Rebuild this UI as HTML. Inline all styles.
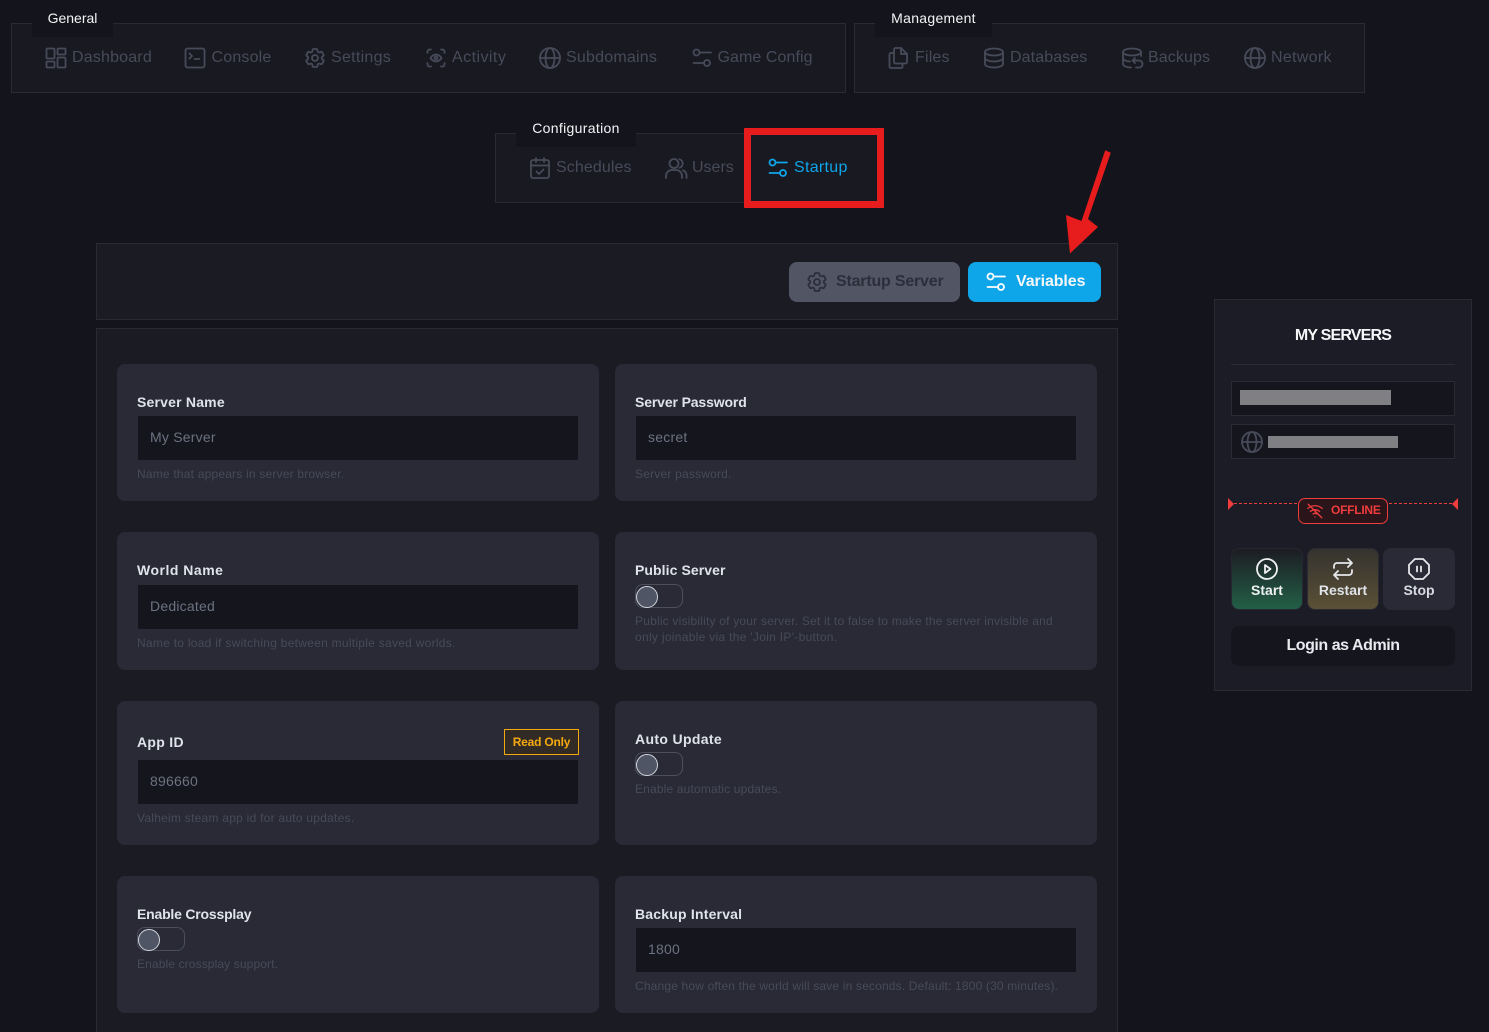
<!DOCTYPE html>
<html><head><meta charset="utf-8">
<style>
*{box-sizing:border-box;margin:0;padding:0}
html,body{width:1489px;height:1032px;overflow:hidden;background:#14141c;font-family:"Liberation Sans",sans-serif}
.a{position:absolute}
.box{position:absolute;background:#191921;border:1px solid #2a2a35}
.lab{position:absolute;background:#14141c;color:#f4f4f6;font-size:14px;height:37px;top:0;line-height:36px;text-align:center}
.n{position:absolute;font-size:16px;color:#474b59;line-height:20px;white-space:nowrap;letter-spacing:.18px}
svg{position:absolute;fill:none;stroke:#474b59;stroke-width:1.8;stroke-linecap:round;stroke-linejoin:round}
.card{position:absolute;background:#2a2a36;border-radius:8px;width:482px}
.l{position:absolute;left:20px;font-size:14px;font-weight:bold;color:#dfe3ea;line-height:18px;white-space:nowrap;letter-spacing:0}
.i{position:absolute;left:21px;width:440px;height:44px;background:#15151d;color:#6b7280;font-size:14px;line-height:43px;padding-left:12px;letter-spacing:.22px}
.h{position:absolute;left:20px;font-size:12px;color:#474b59;line-height:16px;letter-spacing:.2px;white-space:nowrap}
.t{position:absolute;left:20px;width:48px;height:24px;border:1px solid #4b4f5d;border-radius:8px}
.t:after{content:"";position:absolute;left:0;top:1px;width:20px;height:20px;border-radius:50%;background:#4f5565;border:1px solid #d1d5db}
.b{position:absolute;top:548px;width:72px;height:62px;border-radius:8px;text-align:center;color:#e5e7eb;font-size:14px;font-weight:bold;padding-top:33px;line-height:17px}
</style></head><body>
<div class="a" style="left:0;top:0;width:1489px;height:1032px;overflow:hidden">

<div class="box" style="left:11px;top:23px;width:835px;height:70px"></div>
<div class="box" style="left:854px;top:23px;width:511px;height:70px"></div>
<div class="box" style="left:495px;top:133px;width:384px;height:70px"></div>
<div class="lab" style="left:32px;width:81px">General</div>
<div class="lab" style="left:875px;width:117px;letter-spacing:.3px">Management</div>
<div class="lab" style="left:516px;width:120px;top:110px;letter-spacing:.33px">Configuration</div>

<!-- General nav -->
<svg style="left:44px;top:46px" width="24" height="24" viewBox="0 0 24 24"><rect x="2.500" y="2.500" width="8" height="10" rx="1"/><rect x="13.500" y="2.500" width="8" height="6" rx="1"/><rect x="2.500" y="15.500" width="8" height="6" rx="1"/><rect x="13.500" y="11.500" width="8" height="10" rx="1"/></svg>
<div class="n" style="left:72px;top:47.500px">Dashboard</div>
<svg style="left:183px;top:46px" width="24" height="24" viewBox="0 0 24 24"><rect x="2.500" y="2.500" width="19" height="19" rx="2"/><path d="M6.500 7.500l2.500 2.500-2.500 2.500M11.500 13h5"/></svg>
<div class="n" style="left:211.500px;top:47.500px">Console</div>
<svg style="left:303px;top:46px" width="24" height="24" viewBox="0 0 24 24"><path d="M9.594 3.940c.09-.542.56-.94 1.11-.94h2.593c.55 0 1.02.398 1.11.94l.213 1.281c.063.374.313.686.645.87.074.04.147.083.22.127.325.196.72.257 1.075.124l1.217-.456a1.125 1.125 0 011.37.49l1.296 2.247a1.125 1.125 0 01-.26 1.431l-1.003.827c-.293.24-.438.613-.431.992a6.759 6.759 0 010 .255c-.007.378.138.75.43.99l1.005.828c.424.35.534.954.26 1.43l-1.298 2.247a1.125 1.125 0 01-1.369.491l-1.217-.456c-.355-.133-.75-.072-1.076.124a6.570 6.570 0 01-.22.128c-.331.183-.581.495-.644.869l-.213 1.280c-.09.543-.56.941-1.11.941h-2.594c-.55 0-1.020-.398-1.110-.94l-.213-1.281c-.062-.374-.312-.686-.644-.87a6.520 6.520 0 01-.22-.127c-.325-.196-.72-.257-1.076-.124l-1.217.456a1.125 1.125 0 01-1.369-.49l-1.297-2.247a1.125 1.125 0 01.26-1.431l1.004-.827c.292-.24.437-.613.43-.992a6.932 6.932 0 010-.255c.007-.378-.138-.75-.43-.99l-1.004-.828a1.125 1.125 0 01-.26-1.43l1.297-2.247a1.125 1.125 0 011.37-.491l1.216.456c.356.133.751.072 1.076-.124.072-.044.146-.087.22-.128.332-.183.582-.495.644-.869l.214-1.281z"/><circle cx="12" cy="12" r="3"/></svg>
<div class="n" style="left:331px;top:47.500px;letter-spacing:.28px">Settings</div>
<svg style="left:424px;top:46px" width="24" height="24" viewBox="0 0 24 24"><path d="M3.500 7V5.500a2 2 0 012-2H7M17 3.500h1.500a2 2 0 012 2V7M20.500 17v1.500a2 2 0 01-2 2H17M7 20.500H5.500a2 2 0 01-2-2V17"/><path d="M6.500 12s2-3.500 5.500-3.500 5.500 3.500 5.500 3.500-2 3.500-5.500 3.500-5.500-3.500-5.500-3.500z"/><circle cx="12" cy="12" r="1.500"/></svg>
<div class="n" style="left:452px;top:47.500px;letter-spacing:.45px">Activity</div>
<svg style="left:538px;top:46px" width="24" height="24" viewBox="0 0 24 24"><circle cx="12" cy="12" r="10"/><ellipse cx="12" cy="12" rx="4.500" ry="10"/><path d="M2 12h20"/></svg>
<div class="n" style="left:566px;top:47.500px;letter-spacing:.22px">Subdomains</div>
<svg style="left:690px;top:46px" width="24" height="24" viewBox="0 0 24 24"><circle cx="6.500" cy="6.500" r="3"/><circle cx="17" cy="17" r="3"/><path d="M10 6.500h11M3.500 17H14"/></svg>
<div class="n" style="left:717.500px;top:47.500px;letter-spacing:.08px">Game Config</div>

<!-- Management nav -->
<svg style="left:887px;top:46px" width="24" height="24" viewBox="0 0 24 24"><path d="M7 3.500A1.500 1.500 0 018.500 2H14l6 6v8a1.500 1.500 0 01-1.500 1.500h-10A1.500 1.500 0 017 16z"/><path d="M14 2v6h6"/><path d="M7 7H4a1.500 1.500 0 00-1.500 1.500V20.500A1.500 1.500 0 004 22h10a1.500 1.500 0 001.500-1.500v-3"/></svg>
<div class="n" style="left:915px;top:47.500px">Files</div>
<svg style="left:982px;top:46px" width="24" height="24" viewBox="0 0 24 24"><ellipse cx="12" cy="6" rx="9" ry="3.500"/><path d="M3 6v12c0 1.900 4 3.500 9 3.500s9-1.600 9-3.500V6M3 12c0 1.900 4 3.500 9 3.500s9-1.600 9-3.500"/></svg>
<div class="n" style="left:1010px;top:47.500px;letter-spacing:.1px">Databases</div>
<svg style="left:1120px;top:46px" width="24" height="24" viewBox="0 0 24 24"><ellipse cx="12" cy="6" rx="9" ry="3.500"/><path d="M3 6v12c0 1.900 3.500 3.500 8 3.500M21 6v4M3 12c0 1.900 3 3.300 7 3.500"/><path d="M15 12l-2.500 2.500L15 17M12.500 14.500H19a3.500 3.500 0 010 7h-3"/></svg>
<div class="n" style="left:1148px;top:47.500px;letter-spacing:.1px">Backups</div>
<svg style="left:1243px;top:46px" width="24" height="24" viewBox="0 0 24 24"><circle cx="12" cy="12" r="10"/><ellipse cx="12" cy="12" rx="4.500" ry="10"/><path d="M2 12h20"/></svg>
<div class="n" style="left:1271px;top:47.500px;letter-spacing:.3px">Network</div>

<!-- Configuration nav -->
<svg style="left:528px;top:156px" width="24" height="24" viewBox="0 0 24 24"><rect x="3" y="4" width="18" height="18" rx="2"/><path d="M3 9.500h18M8 2v4M16 2v4M8.500 15.500l2.500 2.500 4.500-4.500"/></svg>
<div class="n" style="left:556px;top:157.500px;letter-spacing:.1px">Schedules</div>
<svg style="left:664px;top:156px" width="24" height="24" viewBox="0 0 24 24"><circle cx="10" cy="7.500" r="4.500"/><path d="M2 22v-2a6 6 0 016-6h4a6 6 0 016 6v2M15.500 3.200a4.500 4.500 0 010 8.600M19 14.300a6 6 0 013.500 5.500V22"/></svg>
<div class="n" style="left:692px;top:157.500px;letter-spacing:0">Users</div>
<svg style="left:766px;top:156px;stroke:#0ea5e9" width="24" height="24" viewBox="0 0 24 24"><circle cx="6.500" cy="6.500" r="3"/><circle cx="17" cy="17" r="3"/><path d="M10 6.500h11M3.500 17H14"/></svg>
<div class="n" style="left:794px;top:157.500px;color:#0ea5e9;letter-spacing:.3px">Startup</div>

<!-- Toolbar -->
<div class="box" style="left:96px;top:243px;width:1022px;height:77px;background:#1b1b24"></div>
<div class="a" style="left:789px;top:262px;width:171px;height:40px;background:#525664;border-radius:8px"></div>
<svg style="left:805px;top:270px;stroke:#2d2d3b" width="24" height="24" viewBox="0 0 24 24"><path d="M9.594 3.940c.09-.542.56-.94 1.11-.94h2.593c.55 0 1.02.398 1.11.94l.213 1.281c.063.374.313.686.645.87.074.04.147.083.22.127.325.196.72.257 1.075.124l1.217-.456a1.125 1.125 0 011.37.49l1.296 2.247a1.125 1.125 0 01-.26 1.431l-1.003.827c-.293.24-.438.613-.431.992a6.759 6.759 0 010 .255c-.007.378.138.75.43.99l1.005.828c.424.35.534.954.26 1.43l-1.298 2.247a1.125 1.125 0 01-1.369.491l-1.217-.456c-.355-.133-.75-.072-1.076.124a6.570 6.570 0 01-.22.128c-.331.183-.581.495-.644.869l-.213 1.280c-.09.543-.56.941-1.11.941h-2.594c-.55 0-1.020-.398-1.110-.94l-.213-1.281c-.062-.374-.312-.686-.644-.87a6.520 6.520 0 01-.22-.127c-.325-.196-.72-.257-1.076-.124l-1.217.456a1.125 1.125 0 01-1.369-.49l-1.297-2.247a1.125 1.125 0 01.26-1.431l1.004-.827c.292-.24.437-.613.43-.992a6.932 6.932 0 010-.255c.007-.378-.138-.75-.43-.99l-1.004-.828a1.125 1.125 0 01-.26-1.43l1.297-2.247a1.125 1.125 0 011.37-.491l1.216.456c.356.133.751.072 1.076-.124.072-.044.146-.087.22-.128.332-.183.582-.495.644-.869l.214-1.281z"/><circle cx="12" cy="12" r="3"/></svg>
<div class="a" style="left:836px;top:272px;font-size:16px;font-weight:bold;line-height:20px;color:#2d2d3b;white-space:nowrap;letter-spacing:-.2px">Startup Server</div>
<div class="a" style="left:968px;top:262px;width:133px;height:40px;background:#0ea5e9;border-radius:8px"></div>
<svg style="left:984px;top:270px;stroke:#fff" width="24" height="24" viewBox="0 0 24 24"><circle cx="6.500" cy="6.500" r="3"/><circle cx="17" cy="17" r="3"/><path d="M10 6.500h11M3.500 17H14"/></svg>
<div class="a" style="left:1016px;top:272px;font-size:16px;font-weight:bold;line-height:20px;color:#f4f6f8;white-space:nowrap;letter-spacing:-.1px">Variables</div>

<!-- Red annotations -->
<div class="a" style="left:744px;top:128px;width:140px;height:80px;border:7px solid #e71c1c"></div>
<svg style="left:1060px;top:145px;stroke:none" width="60" height="115" viewBox="0 0 60 115"><path fill="#e71c1c" d="M45.200 5.300L50.800 7.700 28 74 38 82 10 108.500 6 70 21.500 76z"/></svg>

<!-- Main panel -->
<div class="box" style="left:96px;top:328px;width:1022px;height:720px;background:#1b1b24"></div>

<div class="card" style="left:117px;top:364px;height:137px">
<div class="l" style="top:29px;letter-spacing:.2px">Server Name</div><div class="i" style="top:52px">My Server</div><div class="h" style="top:102px">Name that appears in server browser.</div></div>
<div class="card" style="left:615px;top:364px;height:137px">
<div class="l" style="top:29px;letter-spacing:-.13px">Server Password</div><div class="i" style="top:52px">secret</div><div class="h" style="top:102px">Server password.</div></div>

<div class="card" style="left:117px;top:532px;height:138px">
<div class="l" style="top:29px;letter-spacing:.5px">World Name</div><div class="i" style="top:53px">Dedicated</div><div class="h" style="top:103px;letter-spacing:.27px">Name to load if switching between multiple saved worlds.</div></div>
<div class="card" style="left:615px;top:532px;height:138px">
<div class="l" style="top:29px;letter-spacing:.08px">Public Server</div><div class="t" style="top:52px"></div><div class="h" style="top:81px">Public visibility of your server. Set it to false to make the server invisible and</div><div class="h" style="top:97px;letter-spacing:.3px">only joinable via the 'Join IP'-button.</div></div>

<div class="card" style="left:117px;top:701px;height:144px">
<div class="l" style="top:32px;letter-spacing:.3px">App ID</div>
<div class="a" style="left:387px;top:28px;width:75px;height:26px;border:1px solid #f5a911;background:#322a25;color:#f5a911;font-size:12px;font-weight:bold;text-align:center;line-height:24px;letter-spacing:-.2px">Read Only</div>
<div class="i" style="top:59px">896660</div><div class="h" style="top:109px;letter-spacing:.25px">Valheim steam app id for auto updates.</div></div>
<div class="card" style="left:615px;top:701px;height:144px">
<div class="l" style="top:29px;letter-spacing:.35px">Auto Update</div><div class="t" style="top:51px"></div><div class="h" style="top:80px;letter-spacing:.16px">Enable automatic updates.</div></div>

<div class="card" style="left:117px;top:876px;height:137px">
<div class="l" style="top:29px;letter-spacing:-.2px">Enable Crossplay</div><div class="t" style="top:51px"></div><div class="h" style="top:80px;letter-spacing:.12px">Enable crossplay support.</div></div>
<div class="card" style="left:615px;top:876px;height:137px">
<div class="l" style="top:29px;letter-spacing:.2px">Backup Interval</div><div class="i" style="top:52px">1800</div><div class="h" style="top:102px;letter-spacing:.17px">Change how often the world will save in seconds. Default: 1800 (30 minutes).</div></div>

<!-- Sidebar -->
<div class="box" style="left:1214px;top:299px;width:258px;height:392px;background:#1c1c26"></div>
<div class="a" style="left:1214px;width:258px;top:326px;text-align:center;font-size:16px;font-weight:bold;color:#f4f6f8;line-height:20px;letter-spacing:-.8px">MY SERVERS</div>
<div class="a" style="left:1231px;top:364px;width:224px;height:1px;background:#2a2a36"></div>
<div class="a" style="left:1231px;top:381px;width:224px;height:35px;background:#15151d;border:1px solid #2a2a36"></div>
<div class="a" style="left:1240px;top:390px;width:151px;height:15px;background:#808084"></div>
<div class="a" style="left:1231px;top:424px;width:224px;height:35px;background:#15151d;border:1px solid #2a2a36"></div>
<svg style="left:1240px;top:430px" width="24" height="24" viewBox="0 0 24 24"><circle cx="12" cy="12" r="10"/><ellipse cx="12" cy="12" rx="4.500" ry="10"/><path d="M2 12h20"/></svg>
<div class="a" style="left:1268px;top:436px;width:130px;height:12px;background:#808084"></div>

<div class="a" style="left:1234px;top:503px;width:218px;height:0;border-top:1px dashed #ef3c3c"></div>
<svg style="left:1228px;top:498px;stroke:none" width="7" height="12" viewBox="0 0 7 12"><path fill="#ef3c3c" d="M0 0l6 6-6 6z"/></svg>
<svg style="left:1452px;top:498px;stroke:none" width="7" height="12" viewBox="0 0 7 12"><path fill="#ef3c3c" d="M6 0L0 6l6 6z"/></svg>
<div class="a" style="left:1298px;top:498px;width:90px;height:26px;background:#2a151a;border:1px solid #ef3c3c;border-radius:7px"></div>
<svg style="left:1306px;top:502px;stroke:#ef3c3c;stroke-width:1.800" width="18" height="18" viewBox="0 0 24 24"><path d="M3 3l18 18M2.500 8.500A14 14 0 0112 5a14 14 0 019.500 3.500M6 12.500a9 9 0 0112 0M9.500 16a4 4 0 015 0M12 20h.01"/></svg>
<div class="a" style="left:1331px;top:503px;color:#ef3c3c;font-size:12px;font-weight:bold;line-height:15px;white-space:nowrap;letter-spacing:-.25px">OFFLINE</div>

<div class="b" style="left:1231px;background:linear-gradient(#1c1c22,#235f47);border:1px solid #272731;color:#eef0f3">Start</div>
<div class="b" style="left:1307px;background:linear-gradient(#35332f,#5b5036);border:1px solid #2a2a33;color:#dfe3ea">Restart</div>
<div class="b" style="left:1383px;background:#2a2a36;color:#d8dbe2;padding-top:34px">Stop</div>
<svg style="left:1255px;top:557px;stroke:#f0f0f2;stroke-width:1.800" width="24" height="24" viewBox="0 0 24 24"><circle cx="12" cy="12" r="10"/><path d="M10 8l5.500 4-5.500 4z"/></svg>
<svg style="left:1331px;top:557px;stroke:#e5e7eb;stroke-width:1.800" width="24" height="24" viewBox="0 0 24 24"><path d="M17 2l4 4-4 4M3 11V9a3 3 0 013-3h15M7 22l-4-4 4-4M21 13v2a3 3 0 01-3 3H3"/></svg>
<svg style="left:1407px;top:557px;stroke:#e5e7eb;stroke-width:1.800" width="24" height="24" viewBox="0 0 24 24"><path d="M7.900 2h8.200L22 7.900v8.200L16.100 22H7.900L2 16.100V7.900z"/><path d="M10 9.500v5M14 9.500v5"/></svg>

<div class="a" style="left:1231px;top:626px;width:224px;height:40px;background:#15151d;border-radius:8px;color:#e8eaed;font-size:16px;font-weight:bold;text-align:center;line-height:40px;letter-spacing:-.45px">Login as Admin</div>
</div>
</body></html>
